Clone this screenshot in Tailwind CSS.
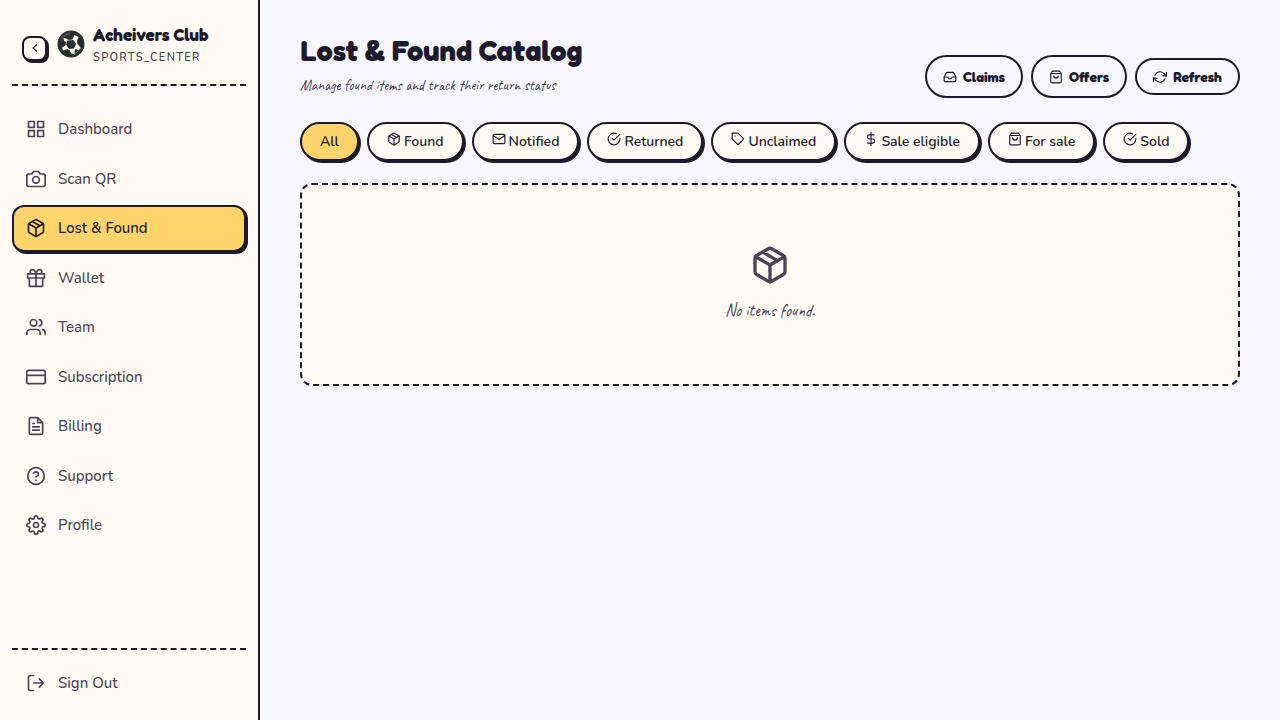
<!DOCTYPE html>
<html lang="en">
<head>
    <meta charset="UTF-8">
    <meta name="viewport" content="width=device-width, initial-scale=1.0">
    <title>Lost &amp; Found Catalog</title>
    <script src="https://cdn.jsdelivr.net/npm/@tailwindcss/browser@4"></script>
</head>
<body class="flex h-screen bg-[#f8f7ff] font-['Nunito','Lato',sans-serif] text-[#1e1a2e]">

    <!-- Icon set -->
    <svg class="hidden" aria-hidden="true">
        <symbol id="grid" viewBox="0 0 24 24"><rect x="3" y="3" width="7" height="7"/><rect x="14" y="3" width="7" height="7"/><rect x="14" y="14" width="7" height="7"/><rect x="3" y="14" width="7" height="7"/></symbol>
        <symbol id="camera" viewBox="0 0 24 24"><path d="M23 19a2 2 0 0 1-2 2H3a2 2 0 0 1-2-2V8a2 2 0 0 1 2-2h4l2-3h6l2 3h4a2 2 0 0 1 2 2z"/><circle cx="12" cy="13" r="4"/></symbol>
        <symbol id="package" viewBox="0 0 24 24"><path d="M16.5 9.4l-9-5.19M21 16V8a2 2 0 0 0-1-1.73l-7-4a2 2 0 0 0-2 0l-7 4A2 2 0 0 0 3 8v8a2 2 0 0 0 1 1.73l7 4a2 2 0 0 0 2 0l7-4A2 2 0 0 0 21 16z"/><path d="M3.27 6.96L12 12.01l8.73-5.05M12 22.08V12"/></symbol>
        <symbol id="gift" viewBox="0 0 24 24"><path d="M20 12v10H4V12M2 7h20v5H2zM12 22V7M12 7H7.5a2.5 2.5 0 0 1 0-5C11 2 12 7 12 7zM12 7h4.500a2.500 2.500 0 0 0 0-5C13 2 12 7 12 7z"/></symbol>
        <symbol id="users" viewBox="0 0 24 24"><path d="M17 21v-2a4 4 0 0 0-4-4H5a4 4 0 0 0-4 4v2"/><circle cx="9" cy="7" r="4"/><path d="M23 21v-2a4 4 0 0 0-3-3.870M16 3.130a4 4 0 0 1 0 7.750"/></symbol>
        <symbol id="card" viewBox="0 0 24 24"><rect x="1" y="4" width="22" height="16" rx="2"/><path d="M1 10h22"/></symbol>
        <symbol id="file" viewBox="0 0 24 24"><path d="M14 2H6a2 2 0 0 0-2 2v16a2 2 0 0 0 2 2h12a2 2 0 0 0 2-2V8zM14 2v6h6M16 13H8M16 17H8M10 9H8"/></symbol>
        <symbol id="help" viewBox="0 0 24 24"><circle cx="12" cy="12" r="10"/><path d="M9.090 9a3 3 0 0 1 5.830 1c0 2-3 3-3 3M12 17h.01"/></symbol>
        <symbol id="settings" viewBox="0 0 24 24"><circle cx="12" cy="12" r="3"/><path d="M19.4 15a1.65 1.65 0 0 0 .33 1.82l.06.06a2 2 0 0 1 0 2.83 2 2 0 0 1-2.83 0l-.06-.06a1.65 1.65 0 0 0-1.82-.33 1.65 1.65 0 0 0-1 1.51V21a2 2 0 0 1-2 2 2 2 0 0 1-2-2v-.09A1.65 1.65 0 0 0 9 19.4a1.65 1.65 0 0 0-1.82.33l-.06.06a2 2 0 0 1-2.83 0 2 2 0 0 1 0-2.83l.06-.06a1.65 1.65 0 0 0 .33-1.82 1.65 1.65 0 0 0-1.51-1H3a2 2 0 0 1-2-2 2 2 0 0 1 2-2h.09A1.65 1.65 0 0 0 4.6 9a1.65 1.65 0 0 0-.33-1.82l-.06-.06a2 2 0 0 1 0-2.83 2 2 0 0 1 2.83 0l.06.06a1.65 1.65 0 0 0 1.82.33H9a1.65 1.65 0 0 0 1-1.51V3a2 2 0 0 1 2-2 2 2 0 0 1 2 2v.09a1.65 1.65 0 0 0 1 1.51 1.65 1.65 0 0 0 1.82-.33l.06-.06a2 2 0 0 1 2.83 0 2 2 0 0 1 0 2.83l-.06.06a1.65 1.65 0 0 0-.33 1.82V9a1.65 1.65 0 0 0 1.51 1H21a2 2 0 0 1 2 2 2 2 0 0 1-2 2h-.09a1.65 1.65 0 0 0-1.51 1z"/></symbol>
        <symbol id="logout" viewBox="0 0 24 24"><path d="M9 21H5a2 2 0 0 1-2-2V5a2 2 0 0 1 2-2h4M16 17l5-5-5-5M21 12H9"/></symbol>
        <symbol id="inbox" viewBox="0 0 24 24"><path d="M22 12h-6l-2 3h-4l-2-3H2"/><path d="M5.45 5.11L2 12v6a2 2 0 0 0 2 2h16a2 2 0 0 0 2-2v-6l-3.45-6.89A2 2 0 0 0 16.76 4H7.24a2 2 0 0 0-1.79 1.11z"/></symbol>
        <symbol id="bag" viewBox="0 0 24 24"><path d="M6 2L3 6v14a2 2 0 0 0 2 2h14a2 2 0 0 0 2-2V6l-3-4zM3 6h18M16 10a4 4 0 0 1-8 0"/></symbol>
        <symbol id="refresh" viewBox="0 0 24 24"><path d="M23 4v6h-6M1 20v-6h6"/><path d="M3.51 9a9 9 0 0 1 14.85-3.36L23 10M1 14l4.640 4.360A9 9 0 0 0 20.490 15"/></symbol>
        <symbol id="mail" viewBox="0 0 24 24"><rect x="2" y="4" width="20" height="16" rx="2"/><path d="M22 6l-10 7L2 6"/></symbol>
        <symbol id="check" viewBox="0 0 24 24"><path d="M22 11.080V12a10 10 0 1 1-5.930-9.140"/><path d="M22 4L12 14.010l-3-3"/></symbol>
        <symbol id="tag" viewBox="0 0 24 24"><path d="M20.590 13.410l-7.170 7.170a2 2 0 0 1-2.830 0L2 12V2h10l8.590 8.590a2 2 0 0 1 0 2.820zM7 7h.01"/></symbol>
        <symbol id="dollar" viewBox="0 0 24 24"><path d="M12 1v22M17 5H9.500a3.500 3.500 0 0 0 0 7h5a3.500 3.500 0 0 1 0 7H6"/></symbol>
        <symbol id="chevron" viewBox="0 0 24 24"><path d="M15 18l-6-6 6-6"/></symbol>
    </svg>

    <!-- Sidebar -->
    <aside class="flex w-[260px] shrink-0 flex-col border-r-2 border-[#1e1a2e] bg-[#fffbf2] px-3">
        <div class="flex h-[86px] items-center gap-2 border-b-2 border-dashed border-[#1e1a2e] pt-2 pl-[10px]">
            <button type="button" aria-label="Collapse sidebar" class="mt-1 flex size-[25px] items-center justify-center rounded-lg border-2 border-[#1e1a2e] bg-[#fffbf2] shadow-[2px_2px_0_#1e1a2e]">
                <svg class="size-3.5 shrink-0 fill-none stroke-current stroke-2"><use href="#chevron"/></svg>
            </button>
            <svg viewBox="0 0 28 28" class="mb-1 ml-0.5 size-7 shrink-0">
                <circle cx="14" cy="14" r="13.500" fill="#28302f"/>
                <path d="M6.500 8l3 .5 2 1.500 4-.5 2-4.500 4 2-1.500 4 .5 3 3 3.500-2 2.500-3-1-1 1.500.5 4-4-1-1-3-2.500-1.500-4.500 1.500-1-3 3.500-2 .5-3-2-2z" fill="#fffbf2"/>
                <path d="M10.500 10.500l6-.5 2.500 4-2 4.500-5 .5-3-4.500z" fill="#28302f"/>
                <path d="M4.500 9Q8 4 13 3M24 18q-3 4-7 6" fill="none" stroke="#87908e" stroke-width="0.800"/>
            </svg>
            <div class="whitespace-nowrap">
                <p class="font-['Fredoka_One','Fredoka','Lato',sans-serif] text-[17px] leading-5 font-bold">Acheivers Club</p>
                <p class="mt-1 text-[11px] leading-[18px] font-semibold tracking-[0.12em] text-[#4a4458]">SPORTS_CENTER</p>
            </div>
        </div>

        <nav class="flex flex-1 flex-col gap-[3px] pt-5 text-[15px] leading-normal font-medium text-[#4a4458]">
            <a href="#dashboard" class="flex items-center gap-3 rounded-xl border-2 border-transparent px-3 py-2.5"><svg class="size-5 fill-none stroke-current stroke-2" stroke-linecap="round" stroke-linejoin="round"><use href="#grid"/></svg>Dashboard</a>
            <a href="#scan" class="flex items-center gap-3 rounded-xl border-2 border-transparent px-3 py-2.5"><svg class="size-5 fill-none stroke-current stroke-2" stroke-linecap="round" stroke-linejoin="round"><use href="#camera"/></svg>Scan QR</a>
            <a href="#lost-found" aria-current="page" class="flex items-center gap-3 rounded-xl border-2 border-[#1e1a2e] bg-[#ffd56b] px-3 py-2.5 text-[#1e1a2e] shadow-[2px_2px_0_#1e1a2e]"><svg class="size-5 fill-none stroke-current stroke-2" stroke-linecap="round" stroke-linejoin="round"><use href="#package"/></svg>Lost &amp; Found</a>
            <a href="#wallet" class="flex items-center gap-3 rounded-xl border-2 border-transparent px-3 py-2.5"><svg class="size-5 fill-none stroke-current stroke-2" stroke-linecap="round" stroke-linejoin="round"><use href="#gift"/></svg>Wallet</a>
            <a href="#team" class="flex items-center gap-3 rounded-xl border-2 border-transparent px-3 py-2.5"><svg class="size-5 fill-none stroke-current stroke-2" stroke-linecap="round" stroke-linejoin="round"><use href="#users"/></svg>Team</a>
            <a href="#subscription" class="flex items-center gap-3 rounded-xl border-2 border-transparent px-3 py-2.5"><svg class="size-5 fill-none stroke-current stroke-2" stroke-linecap="round" stroke-linejoin="round"><use href="#card"/></svg>Subscription</a>
            <a href="#billing" class="flex items-center gap-3 rounded-xl border-2 border-transparent px-3 py-2.5"><svg class="size-5 fill-none stroke-current stroke-2" stroke-linecap="round" stroke-linejoin="round"><use href="#file"/></svg>Billing</a>
            <a href="#support" class="flex items-center gap-3 rounded-xl border-2 border-transparent px-3 py-2.5"><svg class="size-5 fill-none stroke-current stroke-2" stroke-linecap="round" stroke-linejoin="round"><use href="#help"/></svg>Support</a>
            <a href="#profile" class="flex items-center gap-3 rounded-xl border-2 border-transparent px-3 py-2.5"><svg class="size-5 fill-none stroke-current stroke-2" stroke-linecap="round" stroke-linejoin="round"><use href="#settings"/></svg>Profile</a>
        </nav>

        <div class="border-t-2 border-dashed border-[#1e1a2e] pt-[10px] pb-3.5">
            <button type="button" class="flex w-full items-center gap-3 rounded-xl border-2 border-transparent px-3 py-2.5 text-[15px] leading-normal font-medium text-[#4a4458]"><svg class="size-5 fill-none stroke-current stroke-2" stroke-linecap="round" stroke-linejoin="round"><use href="#logout"/></svg>Sign Out</button>
        </div>
    </aside>

    <!-- Content -->
    <main class="min-w-0 flex-1 px-10 pt-8">
        <header class="flex items-end justify-between">
            <div>
                <h1 class="font-['Fredoka_One','Fredoka','Lato',sans-serif] text-[29px] leading-[38px] font-bold">Lost &amp; Found Catalog</h1>
                <p class="mt-1.5 mb-0.5 font-['Caveat',cursive] text-[15px] leading-5 text-[#4a4458]">Manage found items and track their return status</p>
            </div>
            <div class="flex items-center gap-2 font-['Fredoka_One','Fredoka','Lato',sans-serif] text-sm font-bold">
                <button type="button" class="flex h-[43px] items-center gap-1.5 rounded-full border-2 border-[#1e1a2e] px-4"><svg class="size-3.5 fill-none stroke-current stroke-2" stroke-linecap="round" stroke-linejoin="round"><use href="#inbox"/></svg>Claims</button>
                <button type="button" class="flex h-[43px] items-center gap-1.5 rounded-full border-2 border-[#1e1a2e] px-4"><svg class="size-3.5 fill-none stroke-current stroke-2" stroke-linecap="round" stroke-linejoin="round"><use href="#bag"/></svg>Offers</button>
                <button type="button" class="flex h-[37px] items-center gap-1.5 rounded-full border-2 border-[#1e1a2e] px-4"><svg class="size-3.5 fill-none stroke-current stroke-2" stroke-linecap="round" stroke-linejoin="round"><use href="#refresh"/></svg>Refresh</button>
            </div>
        </header>

        <div class="mt-6 flex flex-wrap gap-2 text-sm font-semibold">
            <button type="button" class="flex h-[39px] items-center rounded-full border-2 border-[#1e1a2e] bg-[#ffd56b] px-[18px] shadow-[2px_2px_0_#1e1a2e]">All</button>
            <button type="button" class="flex h-[39px] items-center gap-[3px] rounded-full border-2 border-[#1e1a2e] bg-[#fffbf2] px-[18px] shadow-[2px_2px_0_#1e1a2e]"><svg class="mb-1.5 size-3.5 fill-none stroke-current stroke-2" stroke-linecap="round" stroke-linejoin="round"><use href="#package"/></svg>Found</button>
            <button type="button" class="flex h-[39px] items-center gap-[3px] rounded-full border-2 border-[#1e1a2e] bg-[#fffbf2] px-[18px] shadow-[2px_2px_0_#1e1a2e]"><svg class="mb-1.5 size-3.5 fill-none stroke-current stroke-2" stroke-linecap="round" stroke-linejoin="round"><use href="#mail"/></svg>Notified</button>
            <button type="button" class="flex h-[39px] items-center gap-[3px] rounded-full border-2 border-[#1e1a2e] bg-[#fffbf2] px-[18px] shadow-[2px_2px_0_#1e1a2e]"><svg class="mb-1.5 size-3.5 fill-none stroke-current stroke-2" stroke-linecap="round" stroke-linejoin="round"><use href="#check"/></svg>Returned</button>
            <button type="button" class="flex h-[39px] items-center gap-[3px] rounded-full border-2 border-[#1e1a2e] bg-[#fffbf2] px-[18px] shadow-[2px_2px_0_#1e1a2e]"><svg class="mb-1.5 size-3.5 fill-none stroke-current stroke-2" stroke-linecap="round" stroke-linejoin="round"><use href="#tag"/></svg>Unclaimed</button>
            <button type="button" class="flex h-[39px] items-center gap-[3px] rounded-full border-2 border-[#1e1a2e] bg-[#fffbf2] px-[18px] shadow-[2px_2px_0_#1e1a2e]"><svg class="mb-1.5 size-3.5 fill-none stroke-current stroke-2" stroke-linecap="round" stroke-linejoin="round"><use href="#dollar"/></svg>Sale eligible</button>
            <button type="button" class="flex h-[39px] items-center gap-[3px] rounded-full border-2 border-[#1e1a2e] bg-[#fffbf2] px-[18px] shadow-[2px_2px_0_#1e1a2e]"><svg class="mb-1.5 size-3.5 fill-none stroke-current stroke-2" stroke-linecap="round" stroke-linejoin="round"><use href="#bag"/></svg>For sale</button>
            <button type="button" class="flex h-[39px] items-center gap-[3px] rounded-full border-2 border-[#1e1a2e] bg-[#fffbf2] px-[18px] shadow-[2px_2px_0_#1e1a2e]"><svg class="mb-1.5 size-3.5 fill-none stroke-current stroke-2" stroke-linecap="round" stroke-linejoin="round"><use href="#check"/></svg>Sold</button>
        </div>

        <section class="mt-[22px] flex flex-col items-center rounded-xl border-2 border-dashed border-[#1e1a2e] bg-[#fffbf2] pt-[60px] pb-[61px] text-[#4a4458]">
            <svg class="size-10 fill-none stroke-current stroke-2" stroke-linecap="round" stroke-linejoin="round"><use href="#package"/></svg>
            <p class="mt-3.5 font-['Caveat',cursive] text-[17px] leading-6">No items found.</p>
        </section>
    </main>
</body>
</html>
